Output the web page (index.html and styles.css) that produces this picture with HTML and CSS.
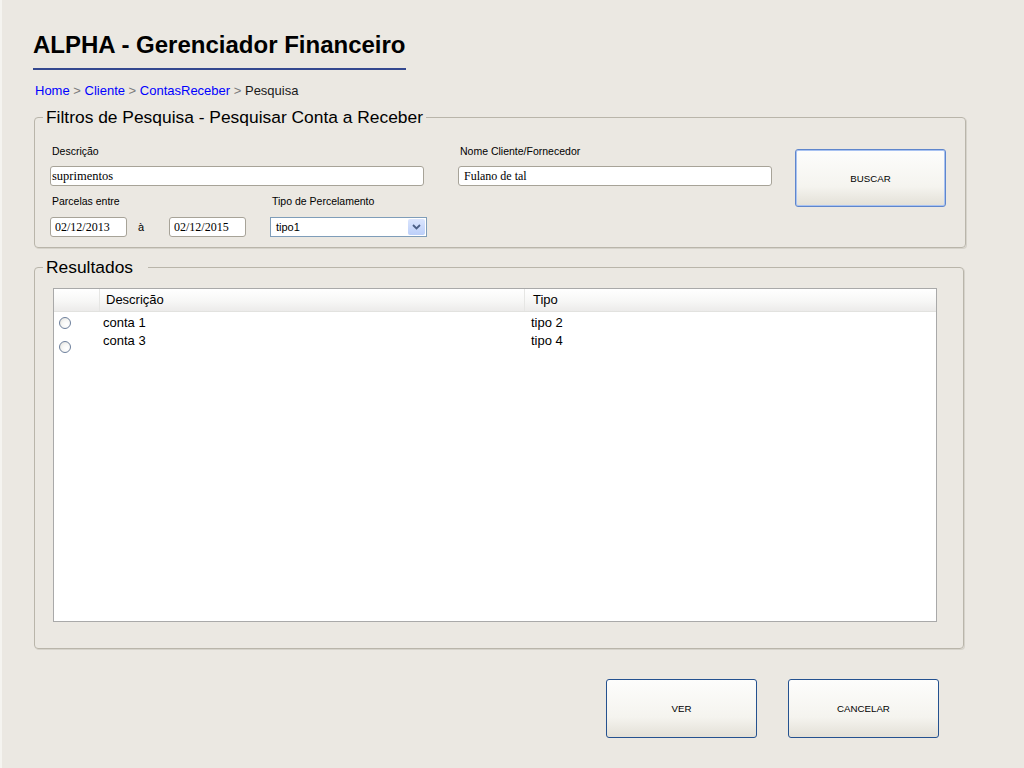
FILE: index.html
```html
<!DOCTYPE html>
<html lang="pt-BR">
<head>
<meta charset="utf-8">
<title>ALPHA - Gerenciador Financeiro</title>
<link rel="stylesheet" href="styles.css">
</head>
<body>
<div class="page">
  <header class="top">
    <h1 class="title">ALPHA - Gerenciador Financeiro</h1>
    <nav class="crumbs"><a href="#">Home</a><span class="sep"> &gt; </span><a href="#">Cliente</a><span class="sep"> &gt; </span><a href="#">ContasReceber</a><span class="sep"> &gt; </span><span class="current">Pesquisa</span></nav>
  </header>

  <fieldset class="box filters">
    <legend>Filtros de Pesquisa - Pesquisar Conta a Receber</legend>
    <div class="filter-row">
      <div class="col-left">
        <label class="lbl">Descrição</label>
        <input class="txt wide" type="text" value="suprimentos">
        <div class="sub-row">
          <div class="group group-dates">
            <label class="lbl">Parcelas entre</label>
            <div class="dates">
              <input class="txt date" type="text" value="02/12/2013">
              <span class="and">à</span>
              <input class="txt date" type="text" value="02/12/2015">
            </div>
          </div>
          <div class="group">
            <label class="lbl">Tipo de Percelamento</label>
            <div class="select">
              <span class="select-text">tipo1</span>
              <span class="arrow"><svg width="9" height="6" viewBox="0 0 9 6"><path d="M1 1 L4.5 4.5 L8 1" fill="none" stroke="#4b5f86" stroke-width="1.8"/></svg></span>
            </div>
          </div>
        </div>
      </div>
      <div class="col-mid">
        <label class="lbl">Nome Cliente/Fornecedor</label>
        <input class="txt name" type="text" value="Fulano de tal">
      </div>
      <button class="btn btn-default" type="button">BUSCAR</button>
    </div>
  </fieldset>

  <fieldset class="box results">
    <legend class="legend-wide">Resultados</legend>
    <div class="grid">
      <div class="grid-head">
        <div class="h-sel"></div>
        <div class="h-desc">Descrição</div>
        <div class="h-tipo">Tipo</div>
      </div>
      <div class="grid-body">
        <div class="radio-col">
          <span class="radio"></span>
          <span class="radio"></span>
        </div>
        <div class="rows">
          <div class="row"><span class="c-desc">conta 1</span><span class="c-tipo">tipo 2</span></div>
          <div class="row"><span class="c-desc">conta 3</span><span class="c-tipo">tipo 4</span></div>
        </div>
      </div>
    </div>
  </fieldset>

  <div class="actions">
    <button class="btn" type="button">VER</button>
    <button class="btn" type="button">CANCELAR</button>
  </div>
</div>
</body>
</html>
```
FILE: styles.css
```css
html {
  background: #ebe8e2;
}

body {
  margin: 0;
  font-family: "Liberation Sans", Arial, sans-serif;
  color: #000;
}

.page {
  min-height: 768px;
  box-sizing: border-box;
  border-left: 2px solid #f5f4f0;
  padding: 31px 0 0 31px;
}

.top {
  display: flex;
  flex-direction: column;
  align-items: flex-start;
}

.title {
  margin: 0;
  font-size: 24px;
  line-height: 28px;
  font-weight: bold;
  padding-bottom: 9px;
  border-bottom: 2px solid #34488f;
}

.crumbs {
  margin-top: 13px;
  padding-left: 2px;
  font-size: 13px;
  line-height: 15px;
  color: #1a1a1a;
}

.crumbs a {
  color: #0000ff;
  text-decoration: none;
}

.crumbs .sep {
  color: #7a7a7a;
}

.box {
  margin: 9px 0 0 1px;
  padding: 0;
  border: 1px solid #b9b5aa;
  border-radius: 4px;
  box-shadow: 1px 1px 0 #d6d3cb;
  box-sizing: border-box;
  min-width: 0;
}

.box legend {
  margin-left: 8px;
  padding: 0 3px;
  font-size: 17.4px;
  line-height: 20px;
  color: #000;
}

.box legend.legend-wide {
  padding-right: 15px;
}

.filters {
  width: 932px;
  padding: 18px 0 10px 0;
}

.filter-row {
  display: flex;
  align-items: flex-start;
  padding-left: 15px;
}

.col-left {
  width: 377px;
  display: flex;
  flex-direction: column;
}

.lbl {
  display: block;
  font-size: 10.5px;
  line-height: 13px;
  padding-left: 2px;
  color: #000;
}

.txt {
  display: block;
  box-sizing: border-box;
  height: 20px;
  margin: 8px 0 0;
  border: 1px solid #a7a398;
  border-radius: 3px;
  padding: 0 1px;
  background: #fff;
  font-family: "Liberation Serif", "Times New Roman", serif;
  font-size: 12.5px;
  color: #000;
  outline: none;
}

.wide {
  width: 374px;
}

.sub-row {
  display: flex;
  gap: 24px;
  margin-top: 9px;
}

.group-dates {
  width: 196px;
}

.dates {
  display: flex;
  align-items: center;
  margin-top: 9px;
}

.date {
  width: 77px;
  margin: 0;
  padding-left: 4px;
  font-size: 12px;
}

.and {
  box-sizing: border-box;
  width: 42px;
  padding-left: 11px;
  font-size: 11px;
}

.select {
  box-sizing: border-box;
  width: 157px;
  height: 20px;
  margin-top: 9px;
  border: 1px solid #7f9db9;
  background: #fff;
  display: flex;
  align-items: center;
  padding-left: 5px;
  font-size: 11px;
}

.arrow {
  margin-left: auto;
  margin-right: 1px;
  width: 17px;
  height: 16px;
  border-radius: 2px;
  background: linear-gradient(#dbe5fd, #bccff9);
  display: flex;
  align-items: center;
  justify-content: center;
}

.col-mid {
  width: 314px;
  margin-left: 31px;
}

.name {
  width: 314px;
  padding-left: 5px;
  font-size: 12px;
}

.btn {
  box-sizing: border-box;
  width: 151px;
  height: 59px;
  padding: 0;
  border: 1px solid #24518f;
  border-radius: 3px;
  background: linear-gradient(#fdfdfc 0%, #f5f4ef 65%, #e3e0d7 100%);
  font-family: "Liberation Sans", Arial, sans-serif;
  font-size: 9.7px;
  color: #000;
}

.btn-default {
  margin: 4px 0 0 23px;
  height: 58px;
  border: 1px solid #5f86cc;
  box-shadow: inset 0 0 0 1px #a8c2f1;
}

.results {
  width: 930px;
  padding: 11px 0 26px 0;
}

.grid {
  box-sizing: border-box;
  width: 884px;
  height: 334px;
  margin-left: 18px;
  border: 1px solid #a9a9a9;
  background: #fff;
  font-size: 13px;
}

.grid-head {
  display: flex;
  height: 22px;
  line-height: 22px;
  background: linear-gradient(#ffffff 0%, #f7f7f6 55%, #ecebea 100%);
  border-bottom: 1px solid #e2e2df;
}

.h-sel {
  box-sizing: border-box;
  width: 46px;
  border-right: 1px solid #e6e6e4;
}

.h-desc {
  box-sizing: border-box;
  width: 425px;
  padding-left: 6px;
  border-right: 1px solid #e6e6e4;
}

.h-tipo {
  padding-left: 8px;
}

.grid-body {
  display: flex;
}

.radio-col {
  box-sizing: border-box;
  width: 46px;
  padding: 5px 0 0 5px;
  display: flex;
  flex-direction: column;
  gap: 12px;
}

.radio {
  display: block;
  box-sizing: border-box;
  width: 12px;
  height: 12px;
  border-radius: 50%;
  border: 1px solid #6d7f9c;
  background: radial-gradient(circle at 65% 65%, #ffffff 0%, #f7f7f5 45%, #dedcd5 100%);
}

.rows {
  flex: 1;
  padding-top: 2px;
}

.row {
  display: flex;
  line-height: 18px;
}

.c-desc {
  box-sizing: border-box;
  width: 425px;
  padding-left: 3px;
}

.c-tipo {
  padding-left: 6px;
}

.actions {
  display: flex;
  justify-content: flex-end;
  gap: 31px;
  width: 906px;
  margin-top: 30px;
}
```
